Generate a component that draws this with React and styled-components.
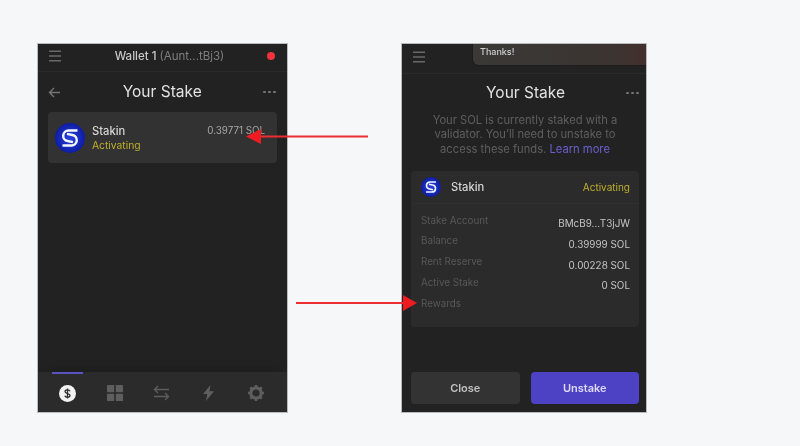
import React from "react";
import styled, { createGlobalStyle } from "styled-components";

const Global = createGlobalStyle`
  html, body { margin: 0; padding: 0; background: #f6f7f9; }
  body { font-family: Inter, "Liberation Sans", sans-serif; width: 800px; height: 446px; overflow: hidden; }
`;

const Page = styled.div`
  position: relative;
  width: 800px;
  height: 446px;
  box-sizing: border-box;
  padding: 44px 0 0 38px;
  display: flex;
  align-items: flex-start;
  gap: 115px;
  filter: blur(0.45px);
`;

const Phone = styled.section`
  position: relative;
  width: ${(p) => p.$w}px;
  height: 368px;
  background: #222222;
  box-shadow: 0 0 0 1px #b9babb;
  display: flex;
  flex-direction: column;
  overflow: hidden;
`;

const TopBar = styled.header`
  height: ${(p) => p.$h}px;
  box-sizing: border-box;
  flex: none;
  display: flex;
  align-items: center;
  justify-content: space-between;
  padding: 0 12px 3px 10px;
  border-bottom: 1px solid #2a2a2a;
`;

const WalletName = styled.div`
  margin-left: 10px;
  font-size: 11.5px;
  font-weight: 500;
  color: #c9c9c9;
  white-space: nowrap;
  span { color: #7f7f7f; font-weight: 400; }
`;

const RedDot = styled.i`
  width: 8px;
  height: 8px;
  border-radius: 50%;
  background: #ee3340;
`;

const TitleRow = styled.div`
  height: ${(p) => p.$h}px;
  box-sizing: border-box;
  flex: none;
  display: flex;
  align-items: center;
  justify-content: space-between;
  padding: ${(p) => p.$pad};
`;

const Title = styled.h1`
  margin: 0;
  font-size: 15.5px;
  font-weight: 400;
  color: #e2e2e2;
  line-height: 20px;
`;

const Dots = styled.div`
  display: flex;
  gap: 2.4px;
  i { width: 2.6px; height: 2.6px; border-radius: 50%; background: #767676; }
`;

const Content = styled.div`
  flex: 1;
  padding: ${(p) => p.$pad};
  min-height: 0;
`;

const ValidatorRow = styled.div`
  height: 51px;
  box-sizing: border-box;
  background: #323232;
  border-radius: 4px;
  display: flex;
  align-items: center;
  padding: 0 12px 0 7px;
`;

const RowText = styled.div`
  flex: 1;
  margin-left: 7px;
  display: flex;
  flex-direction: column;
`;

const Name = styled.div`
  font-size: 11.2px;
  font-weight: 500;
  line-height: 14px;
  color: #d6d6d6;
`;

const Status = styled.div`
  font-size: 10.3px;
  line-height: 14px;
  color: #bfae2c;
`;

const Amount = styled.div`
  font-size: 9.8px;
  line-height: 12px;
  color: #a6a6a6;
  align-self: flex-start;
  margin-top: 13px;
`;

const TabBar = styled.nav`
  height: 40px;
  flex: none;
  background: #2b2b2b;
  box-shadow: 0 -8px 10px -6px #1d1d1d;
  position: relative;
  display: grid;
  grid-template-columns: repeat(5, 47px);
  justify-content: center;
  justify-items: center;
  align-items: center;
  padding: 2px 2px 0 0;
  box-sizing: border-box;
`;

const TabMark = styled.i`
  position: absolute;
  left: 14px;
  top: 0;
  width: 31px;
  height: 2px;
  background: #5b52c4;
`;

const Toast = styled.div`
  position: absolute;
  left: 71px;
  right: 0;
  top: -8px;
  height: 29px;
  box-sizing: border-box;
  padding: 8px 0 0 7px;
  border-radius: 0 0 0 6px;
  background: linear-gradient(90deg, #3a3936, #3b3431 80%, #42302d);
  box-shadow: 0 0 2px rgba(0,0,0,.5);
  font-size: 9px;
  font-weight: 500;
  line-height: 16px;
  color: #cfcfcf;
`;

const Blurb = styled.p`
  margin: 2.5px 0 14.5px;
  padding: 0 9px;
  font-size: 11.2px;
  line-height: 14.5px;
  text-align: center;
  color: #5f5f5f;
  white-space: nowrap;
  a { color: #6a60cf; text-decoration: none; }
`;

const DetailCard = styled.div`
  height: 156px;
  background: #2b2b2b;
  border-radius: 4px;
`;

const DetailHead = styled.div`
  height: 32px;
  display: flex;
  align-items: center;
  padding: 0 9px 0 10px;
  border-bottom: 1px solid #2f2f2f;
`;

const HeadName = styled(Name)`
  flex: 1;
  margin-left: 10px;
`;

const HeadStatus = styled(Status)`
  font-size: 10px;
`;

const DetailRows = styled.div`
  padding: 10px 9px 0 10px;
  display: flex;
  flex-direction: column;
`;

const DetailRow = styled.div`
  height: 20.8px;
  display: flex;
  justify-content: space-between;
  align-items: flex-start;
`;

const Label = styled.span`
  font-size: 9.8px;
  line-height: 14px;
  color: #585858;
`;

const Value = styled.span`
  font-size: 9.9px;
  line-height: 14px;
  margin-top: 2.5px;
  color: #c4c4c4;
`;

const Actions = styled.div`
  flex: none;
  display: flex;
  gap: 11px;
  padding: 0 7px 8px 9px;
`;

const Button = styled.button`
  flex: 1;
  height: 32px;
  border: 0;
  padding: 0;
  border-radius: 4px;
  background: ${(p) => (p.$primary ? "#4d42c4" : "#333333")};
  color: ${(p) => (p.$primary ? "#dcdaf4" : "#c0c0c0")};
  font: 600 11px Inter, "Liberation Sans", sans-serif;
`;

const Arrow = styled.svg`
  position: absolute;
  left: ${(p) => p.$x}px;
  top: ${(p) => p.$y}px;
`;

const Burger = () => (
  <svg width="14" height="12" viewBox="0 0 14 12" fill="none" stroke="#686868" strokeWidth="1.4">
    <path d="M1 1.2h12M1 6h12M1 10.8h12" />
  </svg>
);

const Logo = ({ size }) => (
  <svg width={size} height={size} viewBox="0 0 30 30" style={{ flex: "none" }}>
    <defs>
      <radialGradient id={`lg${size}`} cx="50%" cy="50%" r="55%">
        <stop offset="0" stopColor="#2a3fe0" />
        <stop offset="1" stopColor="#0a1a9c" />
      </radialGradient>
    </defs>
    <circle cx="15" cy="15" r="15" fill={`url(#lg${size})`} />
    <path d="M22.500 7.500H13.500a5.300 5.300 0 0 0-1 10.500l5.500 1.200" fill="none" stroke="#f4f6ff" strokeWidth="2.400" />
    <path d="M7.500 22.500h9a5.300 5.300 0 0 0 1-10.500l-5.500-1.200" fill="none" stroke="#f4f6ff" strokeWidth="2.400" />
  </svg>
);

const Back = () => (
  <svg width="13" height="11" viewBox="0 0 13 11" fill="none" stroke="#747474" strokeWidth="1.4">
    <path d="M12 5.500H1.500M6 1 1.500 5.500 6 10" />
  </svg>
);

const DotsIcon = () => (
  <Dots><i /><i /><i /></Dots>
);

const Tabs = () => (
  <>
    <svg width="17" height="17" viewBox="0 0 17 17">
      <circle cx="8.500" cy="8.500" r="8.500" fill="#f2f2f2" />
      <path d="M11 6.200C10.600 5.200 9.700 4.800 8.500 4.800 7 4.800 6 5.500 6 6.600c0 2.600 5 1.300 5 3.900 0 1.100-1.100 1.800-2.500 1.800-1.300 0-2.300-.5-2.700-1.500M8.500 3.500v10" fill="none" stroke="#2b2b2b" strokeWidth="1.300" />
    </svg>
    <svg width="16" height="16" viewBox="0 0 16 16" fill="#5e5e5e">
      <rect width="7.200" height="7.200" rx=".6" />
      <rect x="8.800" width="7.200" height="7.200" rx=".6" />
      <rect y="8.800" width="7.200" height="7.200" rx=".6" />
      <rect x="8.800" y="8.800" width="7.200" height="7.200" rx=".6" />
    </svg>
    <svg width="17" height="16" viewBox="0 0 17 16" fill="none" stroke="#5e5e5e" strokeWidth="1.300">
      <path d="M16 4.500H1.500M5 1 1.500 4.500 5 8M1 11.500h14.500M12 8l3.500 3.500L12 15" />
    </svg>
    <svg width="11" height="16" viewBox="0 0 11 16" fill="#5e5e5e">
      <path d="M7.500 0 0 9h4.200L3 16l8-9.800H6.500z" />
    </svg>
    <svg width="16" height="16" viewBox="0 0 16 16">
      <path d="M8 2.800a5.200 5.200 0 1 0 0 10.400A5.200 5.200 0 0 0 8 2.800z" fill="none" stroke="#5e5e5e" strokeWidth="3.200" />
      <path d="M8 0v3M8 13v3M0 8h3M13 8h3M2.300 2.300l2.200 2.200M11.500 11.500l2.200 2.200M13.700 2.300l-2.200 2.200M4.500 11.500l-2.200 2.200" stroke="#5e5e5e" strokeWidth="2.600" />
    </svg>
  </>
);

const rows = [
  ["Stake Account", "BMcB9...T3jJW"],
  ["Balance", "0.39999 SOL"],
  ["Rent Reserve", "0.00228 SOL"],
  ["Active Stake", "0 SOL"],
  ["Rewards", ""],
];

export default function App() {
  return (
    <Page>
      <Global />
      <Phone $w={249}>
        <TopBar $h={28}>
          <Burger />
          <WalletName>Wallet 1 <span>(Aunt...tBj3)</span></WalletName>
          <RedDot />
        </TopBar>
        <TitleRow $h={40} $pad="0 11px 0 10px">
          <Back />
          <Title>Your Stake</Title>
          <DotsIcon />
        </TitleRow>
        <Content $pad="0 10px">
          <ValidatorRow>
            <Logo size={30} />
            <RowText>
              <Name>Stakin</Name>
              <Status>Activating</Status>
            </RowText>
            <Amount>0.39771 SOL</Amount>
          </ValidatorRow>
        </Content>
        <TabBar>
          <TabMark />
          <Tabs />
        </TabBar>
      </Phone>

      <Phone $w={244}>
        <Toast>Thanks!</Toast>
        <TopBar $h={30}>
          <Burger />
        </TopBar>
        <TitleRow $h={36} $pad="2px 7px 0 84px">
          <Title>Your Stake</Title>
          <DotsIcon />
        </TitleRow>
        <Content $pad="0 7px 0 9px">
          <Blurb>
            Your SOL is currently staked with a<br />
            validator. You’ll need to unstake to<br />
            access these funds. <a>Learn more</a>
          </Blurb>
          <DetailCard>
            <DetailHead>
              <Logo size={20} />
              <HeadName>Stakin</HeadName>
              <HeadStatus>Activating</HeadStatus>
            </DetailHead>
            <DetailRows>
              {rows.map(([k, v]) => (
                <DetailRow key={k}>
                  <Label>{k}</Label>
                  <Value>{v}</Value>
                </DetailRow>
              ))}
            </DetailRows>
          </DetailCard>
        </Content>
        <Actions>
          <Button>Close</Button>
          <Button $primary>Unstake</Button>
        </Actions>
      </Phone>

      <Arrow $x={246} $y={128} width="123" height="17" viewBox="0 0 123 17">
        <path d="M14 8.500h108" stroke="#ee2d30" strokeWidth="2" />
        <path d="M0 8.500 15 1v15z" fill="#ee1c20" />
      </Arrow>
      <Arrow $x={295} $y={295} width="122" height="17" viewBox="0 0 122 17">
        <path d="M1 8h108" stroke="#ee2d30" strokeWidth="2" />
        <path d="M122 8 108 0v16z" fill="#ee1c20" />
      </Arrow>
    </Page>
  );
}
